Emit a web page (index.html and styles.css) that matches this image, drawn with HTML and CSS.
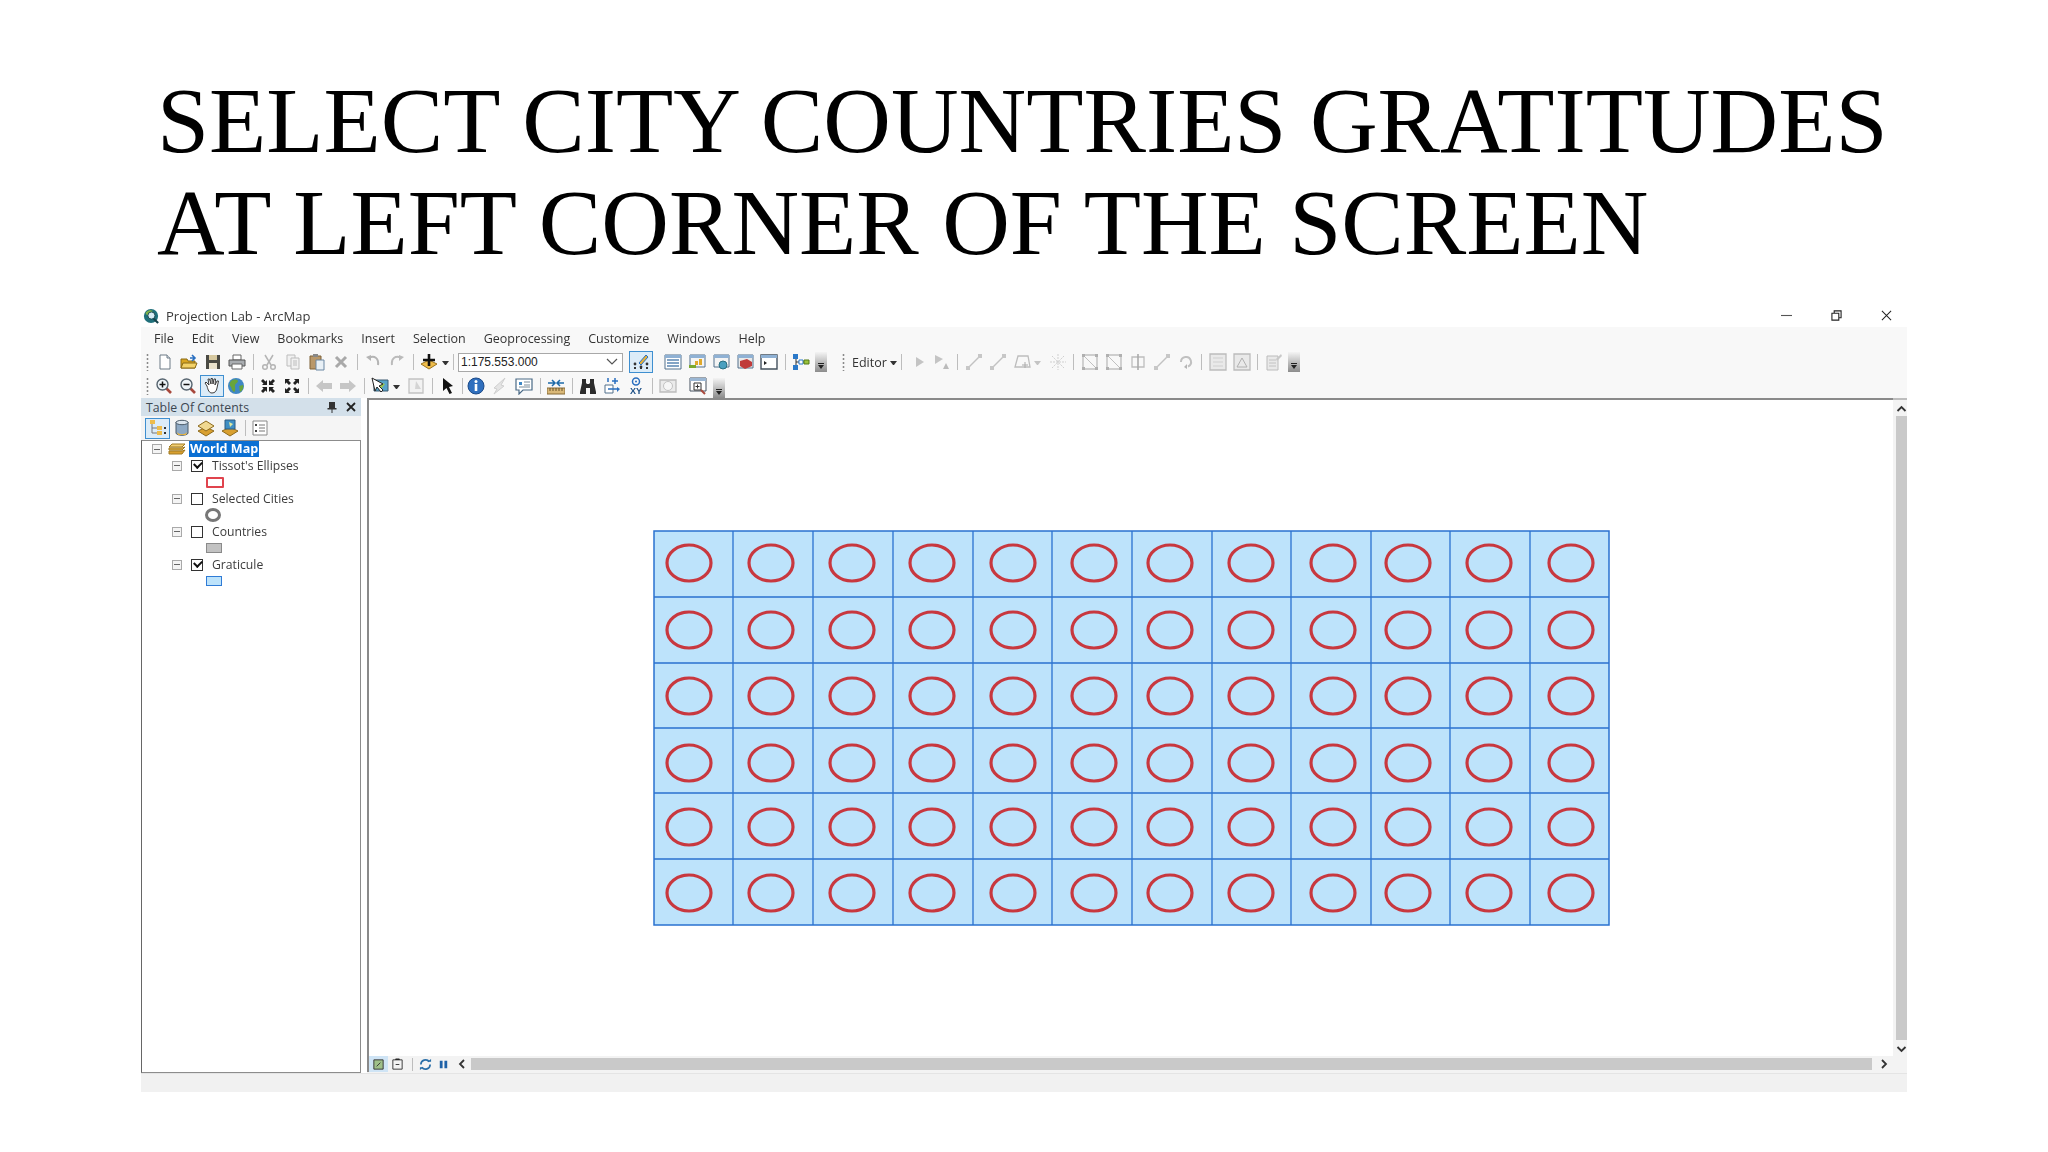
FILE: index.html
```html
<!DOCTYPE html>
<html lang="en">
<head>
<meta charset="utf-8">
<title>Select city countries gratitudes</title>
<link rel="stylesheet" href="styles.css">
</head>
<body>
<svg class="defs" width="0" height="0">
<defs>
<symbol id="new" viewBox="0 0 18 18"><path d="M4 2h7l3 3v11H4z" fill="#fff" stroke="#6d7a86"/><path d="M11 2v3h3" fill="#dfe6ec" stroke="#6d7a86"/></symbol>
<symbol id="open" viewBox="0 0 18 18"><path d="M1 6h6l1 2h7v7H1z" fill="#d9a520" stroke="#8a6a14"/><path d="M1 15l2-5h14l-2 5z" fill="#f3d268" stroke="#8a6a14"/><path d="M10 5h4M12 2l3 3-3 3" fill="none" stroke="#2a6fc0" stroke-width="1.6"/></symbol>
<symbol id="save" viewBox="0 0 18 18"><path d="M2 2h14v14H2z" fill="#4a4a44"/><path d="M5 2h8v5H5z" fill="#d7c9a0"/><path d="M5 10h8v6H5z" fill="#e9e2cc"/></symbol>
<symbol id="print" viewBox="0 0 18 18"><path d="M5 2h8v5H5z" fill="#fff" stroke="#666"/><path d="M1 7h16v6H1z" fill="#a9adb1" stroke="#555"/><path d="M4 11h10v5H4z" fill="#fff" stroke="#666"/></symbol>
<symbol id="cut" viewBox="0 0 18 18"><g fill="none" stroke="#b5b5b5" stroke-width="1.5"><path d="M5 2l6 10M13 2L7 12"/><circle cx="5" cy="14" r="2.3"/><circle cx="13" cy="14" r="2.3"/></g></symbol>
<symbol id="copy" viewBox="0 0 18 18"><g fill="#f1f1f1" stroke="#bdbdbd"><path d="M3 2h8v11H3z"/><path d="M7 5h8v11H7z"/><path d="M9 8h4M9 10h4M9 12h4" fill="none"/></g></symbol>
<symbol id="paste" viewBox="0 0 18 18"><path d="M2 3h11v13H2z" fill="#b9986a" stroke="#7e6238"/><path d="M5 1h5v3H5z" fill="#888"/><path d="M8 7h8v10H8z" fill="#e8f0f6" stroke="#6a87a3"/></symbol>
<symbol id="del" viewBox="0 0 18 18"><path d="M4 4l10 10M14 4L4 14" stroke="#a9a9a9" stroke-width="3"/></symbol>
<symbol id="undo" viewBox="0 0 18 18"><path d="M5 5c5-3 10 0 9 7" fill="none" stroke="#b4b4b4" stroke-width="2"/><path d="M2 4l5-2v6z" fill="#b4b4b4"/></symbol>
<symbol id="redo" viewBox="0 0 18 18"><path d="M13 5C8 2 3 5 4 12" fill="none" stroke="#bbb" stroke-width="2"/><path d="M16 4l-5-2v6z" fill="#bbb"/></symbol>
<symbol id="add" viewBox="0 0 18 18"><path d="M9 7l8 4-8 5-8-5z" fill="#eebc4a" stroke="#9a7420"/><path d="M9 1v12M3 7h12" stroke="#111" stroke-width="2.6"/></symbol>
<symbol id="tool" viewBox="0 0 18 18"><path d="M2 15h14" stroke="#333" stroke-dasharray="2 4" stroke-width="2"/><circle cx="3" cy="11" r="1.4" fill="#333"/><circle cx="9" cy="14" r="1.4" fill="#333"/><circle cx="15" cy="11" r="1.4" fill="#333"/><path d="M7 10l7-8 2 2-7 8z" fill="#e8b23a" stroke="#2a6fc0"/></symbol>
<symbol id="table" viewBox="0 0 18 18"><path d="M1 2h16v14H1z" fill="#fff" stroke="#53708c"/><path d="M1 2h16v3H1z" fill="#8fb1d4"/><path d="M3 7h12M3 10h12M3 13h12" stroke="#5b86b3" stroke-width="1.4"/></symbol>
<symbol id="catalog" viewBox="0 0 18 18"><path d="M2 2h15v12H2z" fill="#f4f4f4" stroke="#53708c"/><path d="M2 2h15v3H2z" fill="#8fb1d4"/><path d="M7 12h3V8H7zM11 12h3V6h-3z" fill="#e0a92c"/><path d="M1 15h7v-3H1z" fill="#7aa82f"/></symbol>
<symbol id="search" viewBox="0 0 18 18"><path d="M2 2h15v12H2z" fill="#f4f4f4" stroke="#53708c"/><path d="M2 2h15v3H2z" fill="#8fb1d4"/><circle cx="11" cy="12" r="4" fill="#4aa0c0" stroke="#2a6f80"/></symbol>
<symbol id="toolbox" viewBox="0 0 18 18"><path d="M2 2h15v13H2z" fill="#e9e9e9" stroke="#53708c"/><path d="M2 2h15v3H2z" fill="#8fb1d4"/><path d="M4 8l7-2 5 3v4l-7 3-5-3z" fill="#c03a3a"/></symbol>
<symbol id="python" viewBox="0 0 18 18"><path d="M1 2h16v14H1z" fill="#fff" stroke="#44515e" stroke-width="1.4"/><path d="M1 2h16v3H1z" fill="#8fb1d4"/><path d="M4 8l3 2-3 2z" fill="#222"/></symbol>
<symbol id="model" viewBox="0 0 18 18"><path d="M4 4v11M4 9h9" stroke="#333"/><path d="M1 1h5v5H1zM1 12h5v5H1z" fill="#2a79c9"/><path d="M7 7h4v4H7z" fill="#fff" stroke="#2a79c9"/><path d="M12 7h5v4h-5z" fill="#9ac23c" stroke="#557a14"/></symbol>
<symbol id="gline" viewBox="0 0 18 18"><path d="M3 15L15 3" stroke="#c2c2c2" stroke-width="1.4"/><path d="M1 13h4v4H1zM13 1h4v4h-4z" fill="#c7c7c7"/></symbol>
<symbol id="gpoly" viewBox="0 0 18 18"><path d="M5 3h10l2 11H2z" fill="none" stroke="#bdbdbd" stroke-width="1.3"/><path d="M9 12h6M12 9v6" stroke="#aaa"/></symbol>
<symbol id="gstar" viewBox="0 0 18 18"><path d="M9 1v16M1 9h16M3 3l12 12M15 3L3 15" stroke="#cfcfcf" stroke-dasharray="2 1"/></symbol>
<symbol id="gtri" viewBox="0 0 18 18"><path d="M7 4v10l8-5z" fill="#c4c4c4"/></symbol>
<symbol id="gtri2" viewBox="0 0 18 18"><path d="M2 2v9l8-5z" fill="#c4c4c4"/><path d="M10 16l3-6 3 6z" fill="#bbb"/></symbol>
<symbol id="gbox" viewBox="0 0 18 18"><path d="M2 2h14v14H2z" fill="none" stroke="#c0c0c0" stroke-width="1.4"/><path d="M2 2l14 14" stroke="#c0c0c0"/><path d="M1 1h3v3H1zM14 1h3v3h-3zM1 14h3v3H1zM14 14h3v3h-3z" fill="#b0b0b0"/></symbol>
<symbol id="gsplit" viewBox="0 0 18 18"><path d="M3 4h12v10H3z" fill="none" stroke="#bdbdbd" stroke-width="1.3"/><path d="M9 1v16" stroke="#aaa" stroke-width="1.6"/></symbol>
<symbol id="grot" viewBox="0 0 18 18"><path d="M4 9a5 5 0 1 1 7 4.5" fill="none" stroke="#c0c0c0" stroke-width="2"/><path d="M10 11v5l-3-2z" fill="#b5b5b5"/></symbol>
<symbol id="gpanel" viewBox="0 0 18 18"><path d="M1 1h16v16H1z" fill="#e9e9e9" stroke="#bcbcbc" stroke-width="1.3"/><path d="M4 5h10M4 9h10M4 13h10" stroke="#cfcfcf"/></symbol>
<symbol id="gpanel2" viewBox="0 0 18 18"><path d="M1 1h16v16H1z" fill="#e9e9e9" stroke="#bcbcbc" stroke-width="1.3"/><path d="M4 14l5-9 5 9z" fill="none" stroke="#b0b0b0"/></symbol>
<symbol id="gattr" viewBox="0 0 18 18"><path d="M2 3h11v14H2z" fill="#e9e9e9" stroke="#bcbcbc"/><path d="M4 7h7M4 10h7M4 13h7" stroke="#c2c2c2"/><path d="M11 6l5-5 1 2-5 5z" fill="#c8c8c8"/></symbol>
<symbol id="zoomin" viewBox="0 0 18 18"><path d="M11 11l5 5" stroke="#a8483c" stroke-width="2.6"/><circle cx="7.5" cy="7.5" r="5.5" fill="#eef4f8" stroke="#55636e" stroke-width="1.4"/><path d="M7.5 4.5v6M4.5 7.5h6" stroke="#111" stroke-width="1.5"/></symbol>
<symbol id="zoomout" viewBox="0 0 18 18"><path d="M11 11l5 5" stroke="#a8483c" stroke-width="2.6"/><circle cx="7.5" cy="7.5" r="5.5" fill="#eef4f8" stroke="#55636e" stroke-width="1.4"/><path d="M4.5 7.5h6" stroke="#111" stroke-width="1.5"/></symbol>
<symbol id="hand" viewBox="0 0 18 18"><path d="M4 9L2 6l1-1 3 3-1-6h1.5L8 7V1.500h1.500L10 7l1-5h1.500L12 8l2-4h1.500L14 11c-.5 3-2 5-5 5-3 0-4-3-5-7z" fill="#fff" stroke="#3c3c3c"/></symbol>
<symbol id="globe" viewBox="0 0 18 18"><circle cx="9" cy="9" r="8" fill="#3f87c4"/><path d="M4 4c3-2 6-2 7 0 0 2-3 2-3 5 0 2 1 5-1 6-3-2-2-5-4-6-1-2 0-3 1-5zM12 9l4-1c1 3-1 6-3 7-1-2 0-4-1-6z" fill="#69a53a"/></symbol>
<symbol id="fixedin" viewBox="0 0 18 18"><g fill="#222"><path d="M8 8H3l1.500-1.500L2 4l2-2 2.500 2.500L8 3zM10 8h5l-1.500-1.500L16 4l-2-2-2.500 2.500L10 3zM8 10H3l1.500 1.500L2 14l2 2 2.500-2.500L8 15zM10 10h5l-1.500 1.500L16 14l-2 2-2.500-2.500L10 15z"/></g></symbol>
<symbol id="fixedout" viewBox="0 0 18 18"><g fill="#222"><path d="M2 2h5L5.500 3.500 8 6 6 8 3.500 5.500 2 7zM16 2h-5l1.500 1.500L10 6l2 2 2.500-2.500L16 7zM2 16h5l-1.500-1.500L8 12l-2-2-2.500 2.500L2 11zM16 16h-5l1.500-1.500L10 12l2-2 2.500 2.500L16 11z"/></g></symbol>
<symbol id="back" viewBox="0 0 18 18"><path d="M1 9l7-6v3h9v6H8v3z" fill="#c6c6c6"/></symbol>
<symbol id="forward" viewBox="0 0 18 18"><path d="M17 9l-7-6v3H1v6h9v3z" fill="#c6c6c6"/></symbol>
<symbol id="selel" viewBox="0 0 18 18"><path d="M3 3h14v11H3z" fill="#57a4c9" stroke="#3d5a70"/><path d="M8 5l6 2-5 6z" fill="#9bc64e"/><path d="M1 1l3 13 2-4 4 5 2-2-4-4 4-2z" fill="#fff" stroke="#222"/></symbol>
<symbol id="clear" viewBox="0 0 18 18"><path d="M2 2h14v14H2z" fill="#f2f2f2" stroke="#c2c2c2" stroke-width="1.3"/><path d="M9 4l5 8H8z" fill="#d4d4d4"/></symbol>
<symbol id="arrow" viewBox="0 0 18 18"><path d="M4 1l10 8-4 1 3 6-2.500 1-3-6L4 14z" fill="#111"/></symbol>
<symbol id="info" viewBox="0 0 18 18"><circle cx="9" cy="9" r="8" fill="#2f6fbe" stroke="#1c4a88"/><path d="M9 7v7" stroke="#fff" stroke-width="2.6"/><circle cx="9" cy="4.500" r="1.500" fill="#fff"/></symbol>
<symbol id="bolt" viewBox="0 0 18 18"><path d="M14 1L3 11l3 1-3 5 10-8-3-1z" fill="#e4e4e4" stroke="#cfcfcf"/></symbol>
<symbol id="popup" viewBox="0 0 18 18"><path d="M1 2h16v11H8l-4 4v-4H1z" fill="#fff" stroke="#4a6a86" stroke-width="1.200"/><path d="M4 5h3v3H4z" fill="#3f87c4"/><path d="M9 5h6M9 8h6M4 10h11" stroke="#7a8b99"/></symbol>
<symbol id="measure" viewBox="0 0 18 18"><path d="M0 11h18v6H0z" fill="#d9b878" stroke="#866b36"/><path d="M3 11v3M6 11v3M9 11v3M12 11v3M15 11v3" stroke="#6a5226"/><path d="M1 6h6M5 3l3 3-3 3M17 6h-6M13 3l-3 3 3 3" fill="none" stroke="#1d6aa8" stroke-width="1.500"/></symbol>
<symbol id="find" viewBox="0 0 18 18"><path d="M3 2h4v4l1 1h2l1-1V2h4v4l2 9v2h-6v-6H7v6H1v-2l2-9z" fill="#2c2c2c"/></symbol>
<symbol id="route" viewBox="0 0 18 18"><path d="M2 8h8v8H2z" fill="#fff" stroke="#53708c"/><path d="M12 1v6M9 4h6M5 5V1M5 12h10" stroke="#2a6fc0" stroke-width="1.500" fill="none"/><path d="M14 10l3 2-3 3z" fill="#2a6fc0"/></symbol>
<symbol id="xy" viewBox="0 0 18 18"><circle cx="9" cy="4.500" r="3.500" fill="none" stroke="#2a6fc0" stroke-width="1.500"/><circle cx="9" cy="4.500" r="1" fill="#2a6fc0"/><text x="9" y="17" text-anchor="middle" class="xytext">XY</text></symbol>
<symbol id="time" viewBox="0 0 18 18"><path d="M1 3h16v12H1z" fill="#ebebeb" stroke="#bcbcbc" stroke-width="1.300"/><circle cx="9" cy="9" r="4.500" fill="#f6f6f6" stroke="#c2c2c2"/></symbol>
<symbol id="viewer" viewBox="0 0 18 18"><path d="M1 1h16v13H1z" fill="#fff" stroke="#44515e"/><path d="M1 1h16v3H1z" fill="#9bb7d4"/><path d="M5 6h7v7H5z" fill="#fff" stroke="#333"/><path d="M8.500 7.500v4M6.500 9.500h4" stroke="#333"/><path d="M12 13l4 4" stroke="#a8483c" stroke-width="2"/></symbol>
<symbol id="tocorder" viewBox="0 0 18 18"><path d="M3 4v10M3 9h6M3 14h6" stroke="#777" fill="none"/><path d="M1 1h5v4H1z" fill="#eebc4a"/><path d="M8 7h5v4H8zM8 12h5v4H8z" fill="#eebc4a"/><path d="M15 8h2v2h-2zM15 13h2v2h-2z" fill="#333"/></symbol>
<symbol id="tocsource" viewBox="0 0 18 18"><path d="M3 3h12v11c0 3-12 3-12 0z" fill="#8ea9c4" stroke="#4a5a68"/><ellipse cx="9" cy="3.500" rx="6" ry="2.200" fill="#dbe5ee" stroke="#4a5a68"/><path d="M4 13c2 3 8 3 10 0l-1 3H5z" fill="#e8b23a"/></symbol>
<symbol id="tocvis" viewBox="0 0 18 18"><path d="M9 8l8 4-8 5-8-5z" fill="#d9a030" stroke="#8d6a1c"/><path d="M9 2l8 5-8 5-8-5z" fill="#f0d890" stroke="#8d6a1c"/></symbol>
<symbol id="tocsel" viewBox="0 0 18 18"><path d="M9 8l8 4-8 5-8-5z" fill="#d9a030" stroke="#8d6a1c"/><path d="M4 1h10v9H4z" fill="#3f8fc4" stroke="#2c5a80"/><path d="M8 3l4 2-3 3z" fill="#dfe8a0"/></symbol>
<symbol id="tocopt" viewBox="0 0 18 18"><path d="M2 2h14v14H2z" fill="#fff" stroke="#8a8a8a"/><path d="M4 5h2v2H4zM4 11h2v2H4z" fill="#444"/><path d="M8 6h6M8 9h6M8 12h6" stroke="#777"/></symbol>
<symbol id="stack" viewBox="0 0 18 12"><path d="M4 1h13l-3 3H1z" fill="#f2cf74" stroke="#a07a22"/><path d="M1 5h13l3-1-3 3H1z" fill="#e5b64a" stroke="#a07a22"/><path d="M1 8h13l3-1-3 4H1z" fill="#d9a030" stroke="#a07a22"/></symbol>
<symbol id="layout1" viewBox="0 0 14 14"><path d="M2 2h10v10H2z" fill="#9fc089" stroke="#333"/><path d="M5 9l4-4" stroke="#333"/></symbol>
<symbol id="layout2" viewBox="0 0 14 14"><path d="M2 2h10v10H2z" fill="#f4f4f4" stroke="#333"/><path d="M5 2V1h4v1M5 7h4" stroke="#333"/></symbol>
<symbol id="refresh" viewBox="0 0 14 14"><path d="M2 7a5 5 0 0 1 9-3M12 7a5 5 0 0 1-9 3" fill="none" stroke="#2a6fa8" stroke-width="1.800"/><path d="M9 4h4V1zM5 10H1v3z" fill="#2a6fa8"/></symbol>
<symbol id="pause" viewBox="0 0 14 14"><path d="M3 3h3v8H3zM8 3h3v8H8z" fill="#1f62a8"/></symbol>
</defs>
</svg>

<h1 class="title">SELECT CITY COUNTRIES GRATITUDES<br>AT LEFT CORNER OF THE SCREEN</h1>

<div class="app">
  <div class="titlebar">
    <svg class="appicon" viewBox="0 0 18 18"><circle cx="9" cy="9" r="8" fill="#1f6f7a"/><path d="M3 5c3-3 6-3 8-2-1 3-4 2-5 5-2 0-3-1-3-3z" fill="#7fb04a"/><circle cx="9.500" cy="8.500" r="4" fill="#d8ecf4" stroke="#15424a"/><path d="M12 12l5 5" stroke="#15424a" stroke-width="2.400"/></svg>
    <span class="apptitle">Projection Lab - ArcMap</span>
    <div class="winctl">
      <svg class="wc" viewBox="0 0 12 12"><path d="M0 6h12" stroke="#555" stroke-width="1.200"/></svg>
      <svg class="wc" viewBox="0 0 12 12"><path d="M1 3.500h7.500v7.500H1zM3.500 3.500V1H11v7.500H8.500" fill="none" stroke="#222" stroke-width="1.200"/></svg>
      <svg class="wc" viewBox="0 0 12 12"><path d="M1 1l10 10M11 1L1 11" stroke="#222" stroke-width="1.100"/></svg>
    </div>
  </div>

  <div class="bars">
    <nav class="menubar">
      <span>File</span><span>Edit</span><span>View</span><span>Bookmarks</span><span>Insert</span><span>Selection</span><span>Geoprocessing</span><span>Customize</span><span>Windows</span><span>Help</span>
    </nav>

    <div class="toolrow row1">
      <i class="grip"></i>
      <span class="b"><svg><use href="#new"/></svg></span>
      <span class="b"><svg><use href="#open"/></svg></span>
      <span class="b"><svg><use href="#save"/></svg></span>
      <span class="b"><svg><use href="#print"/></svg></span>
      <i class="sep"></i>
      <span class="b"><svg><use href="#cut"/></svg></span>
      <span class="b"><svg><use href="#copy"/></svg></span>
      <span class="b"><svg><use href="#paste"/></svg></span>
      <span class="b"><svg><use href="#del"/></svg></span>
      <i class="sep"></i>
      <span class="b"><svg><use href="#undo"/></svg></span>
      <span class="b"><svg><use href="#redo"/></svg></span>
      <i class="sep"></i>
      <span class="b"><svg><use href="#add"/></svg></span>
      <i class="caret"></i>
      <i class="sep"></i>
      <div class="combo"><span>1:175.553.000</span><svg class="chev" viewBox="0 0 12 8"><path d="M1 1l5 5 5-5" fill="none" stroke="#555" stroke-width="1.200"/></svg></div>
      <span class="b on wide"><svg><use href="#tool"/></svg></span>
      <span class="gap8"></span>
      <span class="b"><svg><use href="#table"/></svg></span>
      <span class="b"><svg><use href="#catalog"/></svg></span>
      <span class="b"><svg><use href="#search"/></svg></span>
      <span class="b"><svg><use href="#toolbox"/></svg></span>
      <span class="b"><svg><use href="#python"/></svg></span>
      <i class="sep"></i>
      <span class="b"><svg><use href="#model"/></svg></span>
      <i class="over"></i>
      <i class="grip g2"></i>
      <span class="editor">Editor</span><i class="caret"></i>
      <i class="sep"></i>
      <span class="b"><svg><use href="#gtri"/></svg></span>
      <span class="b"><svg><use href="#gtri2"/></svg></span>
      <i class="sep"></i>
      <span class="b"><svg><use href="#gline"/></svg></span>
      <span class="b"><svg><use href="#gline"/></svg></span>
      <span class="b"><svg><use href="#gpoly"/></svg></span>
      <i class="caret light"></i>
      <span class="b after-caret"><svg><use href="#gstar"/></svg></span>
      <i class="sep"></i>
      <span class="b"><svg><use href="#gbox"/></svg></span>
      <span class="b"><svg><use href="#gbox"/></svg></span>
      <span class="b"><svg><use href="#gsplit"/></svg></span>
      <span class="b"><svg><use href="#gline"/></svg></span>
      <span class="b"><svg><use href="#grot"/></svg></span>
      <i class="sep"></i>
      <span class="b"><svg><use href="#gpanel"/></svg></span>
      <span class="b"><svg><use href="#gpanel2"/></svg></span>
      <i class="sep"></i>
      <span class="b"><svg><use href="#gattr"/></svg></span>
      <i class="over"></i>
    </div>

    <div class="toolrow row2">
      <i class="grip"></i>
      <span class="b"><svg><use href="#zoomin"/></svg></span>
      <span class="b"><svg><use href="#zoomout"/></svg></span>
      <span class="b on"><svg><use href="#hand"/></svg></span>
      <span class="b"><svg><use href="#globe"/></svg></span>
      <i class="sep"></i>
      <span class="b"><svg><use href="#fixedin"/></svg></span>
      <span class="b"><svg><use href="#fixedout"/></svg></span>
      <i class="sep"></i>
      <span class="b"><svg><use href="#back"/></svg></span>
      <span class="b"><svg><use href="#forward"/></svg></span>
      <i class="sep"></i>
      <span class="b"><svg><use href="#selel"/></svg></span>
      <i class="caret"></i>
      <span class="b after-caret"><svg><use href="#clear"/></svg></span>
      <i class="sep"></i>
      <span class="b"><svg><use href="#arrow"/></svg></span>
      <i class="sep narrow"></i>
      <span class="b"><svg><use href="#info"/></svg></span>
      <span class="b"><svg><use href="#bolt"/></svg></span>
      <span class="b"><svg><use href="#popup"/></svg></span>
      <i class="sep"></i>
      <span class="b"><svg><use href="#measure"/></svg></span>
      <i class="sep"></i>
      <span class="b"><svg><use href="#find"/></svg></span>
      <span class="b"><svg><use href="#route"/></svg></span>
      <span class="b"><svg><use href="#xy"/></svg></span>
      <i class="sep"></i>
      <span class="b"><svg><use href="#time"/></svg></span>
      <span class="gap6"></span>
      <span class="b"><svg><use href="#viewer"/></svg></span>
      <i class="over o2"></i>
    </div>
  </div>

  <div class="work">
    <aside class="toc">
      <div class="tochead"><span>Table Of Contents</span>
        <svg class="pin" viewBox="0 0 10 12"><path d="M2 1h6v6h1.500v1.500H5.500V12h-1V8.500H.5V7H2z" fill="#333"/></svg>
        <svg class="closex" viewBox="0 0 10 10"><path d="M1 1l8 8M9 1L1 9" stroke="#222" stroke-width="1.800"/></svg>
      </div>
      <div class="toctools">
        <span class="tb on"><svg><use href="#tocorder"/></svg></span>
        <span class="tb"><svg><use href="#tocsource"/></svg></span>
        <span class="tb"><svg><use href="#tocvis"/></svg></span>
        <span class="tb"><svg><use href="#tocsel"/></svg></span>
        <i class="sep"></i>
        <span class="tb"><svg><use href="#tocopt"/></svg></span>
      </div>
      <div class="tree">
        <div class="tr root"><i class="mn"></i><svg class="stack"><use href="#stack"/></svg><span class="sel">World Map</span></div>
        <div class="layer"><div class="tr"><i class="mn"></i><i class="cb ck"></i><span>Tissot's Ellipses</span></div><div class="sym"><i class="s red"></i></div></div>
        <div class="layer"><div class="tr"><i class="mn"></i><i class="cb"></i><span>Selected Cities</span></div><div class="sym"><i class="s ring"></i></div></div>
        <div class="layer"><div class="tr"><i class="mn"></i><i class="cb"></i><span>Countries</span></div><div class="sym"><i class="s grey"></i></div></div>
        <div class="layer"><div class="tr"><i class="mn"></i><i class="cb ck"></i><span>Graticule</span></div><div class="sym"><i class="s blue"></i></div></div>
      </div>
    </aside>

    <section class="mapwrap">
      <div class="mapcol">
        <div class="canvas">
          <svg class="grat" viewBox="653 530 958 396">
            <defs>
              <g id="ringrow">
                <ellipse cx="689" rx="22" ry="18"/><ellipse cx="771" rx="22" ry="18"/><ellipse cx="852" rx="22" ry="18"/><ellipse cx="932" rx="22" ry="18"/><ellipse cx="1013" rx="22" ry="18"/><ellipse cx="1094" rx="22" ry="18"/><ellipse cx="1170" rx="22" ry="18"/><ellipse cx="1251" rx="22" ry="18"/><ellipse cx="1333" rx="22" ry="18"/><ellipse cx="1408" rx="22" ry="18"/><ellipse cx="1489" rx="22" ry="18"/><ellipse cx="1571" rx="22" ry="18"/>
              </g>
            </defs>
            <rect class="gfill" x="654" y="531" width="955" height="394"/>
            <path class="glines" d="M733 531V925M813 531V925M893 531V925M973 531V925M1052 531V925M1132 531V925M1212 531V925M1291 531V925M1371 531V925M1450 531V925M1530 531V925M654 597H1609M654 663H1609M654 728H1609M654 793H1609M654 859H1609"/>
            <g class="rings">
              <use href="#ringrow" y="563"/><use href="#ringrow" y="630"/><use href="#ringrow" y="696"/><use href="#ringrow" y="763"/><use href="#ringrow" y="827"/><use href="#ringrow" y="893"/>
            </g>
          </svg>
        </div>
        <div class="status">
          <span class="sb on"><svg><use href="#layout1"/></svg></span>
          <span class="sb"><svg><use href="#layout2"/></svg></span>
          <i class="sep"></i>
          <span class="sb"><svg><use href="#refresh"/></svg></span>
          <span class="sb"><svg><use href="#pause"/></svg></span>
          <svg class="arr" viewBox="0 0 8 10"><path d="M6 1L2 5l4 4" fill="none" stroke="#333" stroke-width="1.800"/></svg>
          <div class="hthumb"></div>
          <svg class="arr" viewBox="0 0 8 10"><path d="M2 1l4 4-4 4" fill="none" stroke="#333" stroke-width="1.800"/></svg>
        </div>
      </div>
      <div class="vscroll">
        <svg class="varr" viewBox="0 0 10 8"><path d="M1 6l4-4 4 4" fill="none" stroke="#333" stroke-width="1.800"/></svg>
        <div class="vthumb"></div>
        <svg class="varr" viewBox="0 0 10 8"><path d="M1 2l4 4 4-4" fill="none" stroke="#333" stroke-width="1.800"/></svg>
      </div>
    </section>
  </div>
  <div class="bottom"></div>
</div>
</body>
</html>
```
FILE: styles.css
```css
* { box-sizing: border-box; }
html, body { margin: 0; background: #fff; }
body { width: 2048px; height: 1152px; overflow: hidden; font-family: "Open Sans", "Noto Sans", sans-serif; color: #333; }
.defs { position: absolute; }
i { display: block; flex: none; }

.title {
  margin: 0;
  padding: 70px 0 0 157px;
  height: 305px;
  font: 400 93.7px/102px "Liberation Serif", serif;
  color: #000;
  white-space: nowrap;
}

.app { margin-left: 141px; width: 1766px; filter: blur(0.45px); }

.titlebar { height: 22px; display: flex; align-items: center; padding-left: 2px; }
.appicon { width: 16px; height: 16px; margin-right: 7px; }
.apptitle { font-size: 13px; color: #3a3a3a; }
.winctl { margin-left: auto; display: flex; gap: 39px; padding: 0 15px 2px 0; }
.wc { width: 11px; height: 11px; }

.bars { background: #f8f8f8; height: 71px; }
.menubar { height: 23px; display: flex; align-items: center; gap: 18px; padding-left: 13px; font-size: 12.5px; color: #333; }
.menubar span { display: block; }

.toolrow { height: 24px; display: flex; align-items: center; }
.grip { width: 12px; height: 18px; background: radial-gradient(circle, #8a8a8a 0.9px, transparent 1.2px) 5px 0 / 3px 4px repeat-y; }
.grip.g2 { margin-left: 10px; margin-right: 3px; }
.row2 .grip { width: 11px; }
.b { flex: none; width: 24px; height: 22px; display: flex; align-items: center; justify-content: center; }
.b svg { width: 18px; height: 18px; }
.b.on { border: 1.5px solid #3f8fd0; background: #dcecf8; }
.b.wide { margin-left: 6px; }
.b.after-caret { margin-left: 4px; }
.sep { width: 8px; height: 16px; background: linear-gradient(#bdbdbd, #bdbdbd) center / 1px 100% no-repeat; }
.sep.narrow { width: 4px; }
.caret { width: 7px; height: 0; margin: 2px 0.5px 0; border-left: 3.5px solid transparent; border-right: 3.5px solid transparent; border-top: 4px solid #333; }
.caret.light { border-top-color: #c4c4c4; }
.combo { width: 165px; height: 19px; margin-left: 1px; background: #fff; border: 1px solid #a8a8a8; display: flex; align-items: center; justify-content: space-between; padding: 0 4px 0 2px; font: 12px "Liberation Sans", sans-serif; color: #222; }
.chev { width: 12px; height: 8px; }
.gap8 { width: 8px; flex: none; }
.gap6 { width: 6px; flex: none; }
.over { width: 12px; height: 20px; margin-left: 2px; background: linear-gradient(#f4f4f4, #8c8c8c); position: relative; }
.over::before { content: ""; position: absolute; left: 3px; bottom: 8px; width: 6px; height: 1.5px; background: #222; }
.over::after { content: ""; position: absolute; left: 3px; bottom: 3px; width: 0; height: 0; border-left: 3px solid transparent; border-right: 3px solid transparent; border-top: 4px solid #222; }
.over.o2 { margin-left: 3px; margin-top: 4px; }
.editor { font-size: 12.5px; color: #333; margin-right: 3px; }
.xytext { font: 700 9px "Liberation Sans", sans-serif; fill: #1d4f85; }

.work { display: flex; height: 675px; }

.toc { width: 220px; flex: none; display: flex; flex-direction: column; background: #f5f5f5; }
.tochead { height: 18px; background: #d3e0ea; display: flex; align-items: center; padding: 0 5px; font-size: 12.3px; color: #3c4650; }
.tochead span { margin-right: auto; }
.pin { width: 10px; height: 12px; margin-right: 9px; }
.closex { width: 10px; height: 10px; }
.toctools { height: 24px; display: flex; align-items: center; padding-left: 4px; }
.tb { width: 24px; height: 21px; display: flex; align-items: center; justify-content: center; flex: none; }
.tb svg { width: 18px; height: 18px; }
.tb.on { width: 25px; border: 1.5px solid #3f8fd0; background: #dcecf8; }
.toctools .sep { width: 6px; }
.tree { flex: 1; background: #fff; border: 1px solid #8c8c8c; border-left-color: #666; padding: 0 0 0 10px; font-size: 12.2px; color: #3c3c3c; }
.tr { display: flex; align-items: center; height: 16px; }
.mn { width: 10px; height: 10px; border: 1px solid #a9a9a9; background: linear-gradient(#666, #666) center / 6px 1px no-repeat #f4f4f4; }
.stack { width: 18px; height: 12px; margin: 0 3px 0 6px; }
.sel { background: #0a6fd3; color: #fff; font-weight: 700; padding: 0 1px; line-height: 16px; font-size: 12.6px; }
.layer { margin-left: 20px; height: 33px; }
.layer .tr { height: 17px; }
.cb { width: 12px; height: 12px; margin: 0 9px; border: 1.5px solid #333; background: #fff; }
.cb.ck { position: relative; }
.cb.ck::after { content: ""; position: absolute; left: 1.5px; top: 0.5px; width: 6px; height: 4px; border-left: 2px solid #111; border-bottom: 2px solid #111; transform: rotate(-45deg); }
.sym { height: 16px; padding-left: 34px; display: flex; align-items: center; }
.s { display: block; }
.s.red { width: 18px; height: 11px; border: 2.5px solid #e0444e; background: #fff; border-radius: 1px; }
.s.ring { width: 16px; height: 14px; margin-left: -1px; border: 3.5px solid #777; border-radius: 50%; background: #fff; }
.s.grey { width: 16px; height: 10px; border: 1px solid #8a8a8a; background: #c2c2c2; }
.s.blue { width: 16px; height: 10px; border: 1px solid #2f7bd6; background: #bde3fb; }

.mapwrap { margin-left: 6px; flex: 1; min-width: 0; display: flex; background: #f3f3f3; }
.mapcol { flex: 1; min-width: 0; display: flex; flex-direction: column; border-top: 2px solid #8a8a8a; }
.canvas { height: 656px; background: #fff; border-left: 2px solid #8a8a8a; padding: 130px 0 0 284px; }
.grat { display: block; width: 958px; height: 396px; }
.gfill { fill: #bde3fb; stroke: #2a72d0; stroke-width: 1.5; }
.glines { fill: none; stroke: #2a72d0; stroke-width: 1.3; }
.rings { fill: none; stroke: #c8383f; stroke-width: 3.2; }

.status { height: 16px; display: flex; align-items: center; border-left: 2px solid #8a8a8a; background: #f3f3f3; }
.sb { width: 17px; height: 16px; margin-right: 1px; display: flex; align-items: center; justify-content: center; flex: none; }
.sb svg { width: 13px; height: 13px; }
.sb.on { width: 19px; background: #cfe4f5; }
.status .sep { width: 10px; height: 13px; }
.arr { width: 8px; height: 10px; flex: none; margin: 0 5px; }
.hthumb { flex: 1; height: 12px; background: #c9c9c9; margin-right: 3px; }

.vscroll { width: 14px; flex: none; display: flex; flex-direction: column; align-items: flex-end; border-top: 2px solid #bdbdbd; background: #f3f3f3; }
.vthumb { width: 11px; flex: 1; background: #c9c9c9; margin: 3px 0 5px; }
.varr { width: 11px; height: 8px; margin: 5px 0 0; }
.varr:last-child { margin: 0 0 20px; }

.bottom { height: 19px; background: #f1f1f1; border-top: 1px solid #e4e4e4; }
```
